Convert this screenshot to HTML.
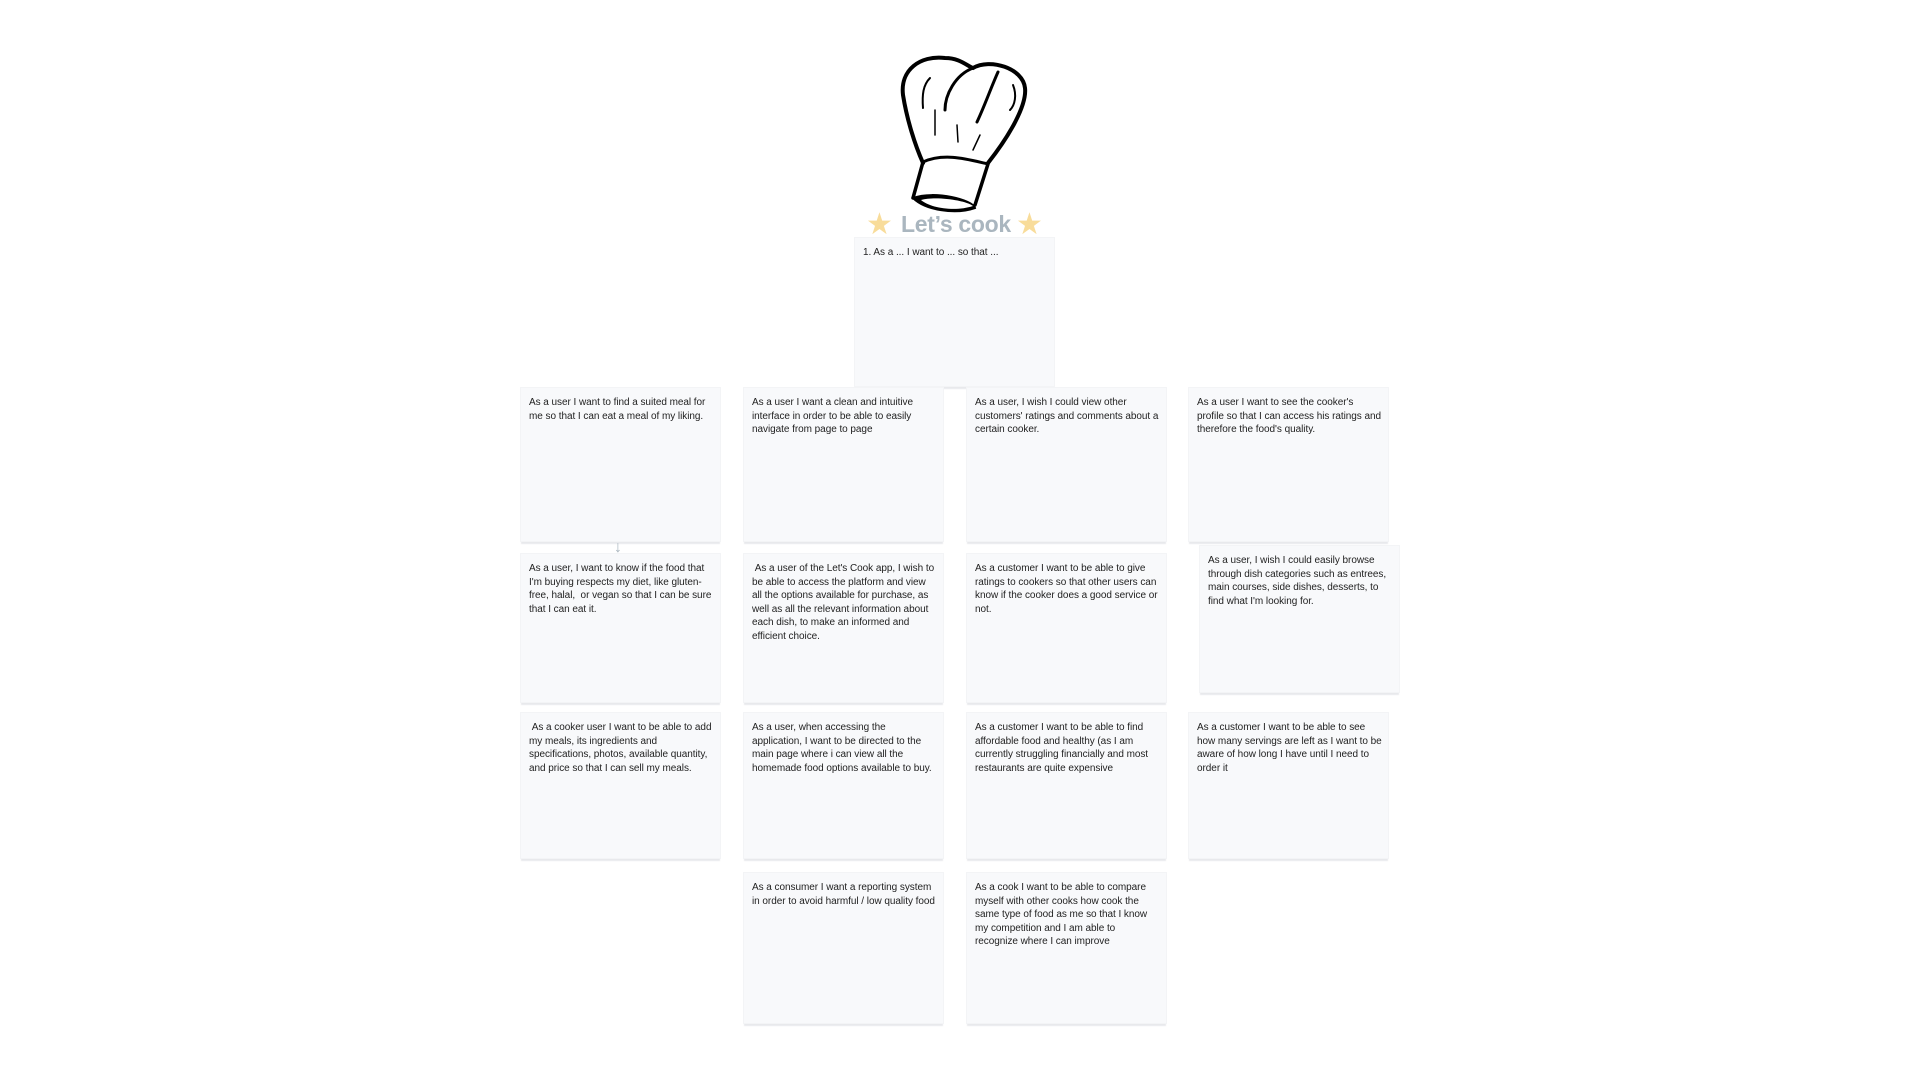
<!DOCTYPE html>
<html><head><meta charset="utf-8"><style>
body{margin:0;width:1920px;height:1080px;background:#fff;position:relative;overflow:hidden;font-family:"Liberation Sans",Arial,sans-serif}
.c{position:absolute;width:199px;background:#f8f9fb;box-shadow:0 0 0 1px #f3f4f6,0 3px 1px 0 #e8e9ec;font-size:10px;line-height:13.5px;color:#222;padding:8px 6px 8px 8px;box-sizing:border-box;letter-spacing:-0.05px}
.t{position:absolute;left:901px;top:211px;font-size:23px;font-weight:bold;color:#aab6bf;letter-spacing:-0.3px}
.s{position:absolute;top:210px;font-size:30px;color:#f8dc9a;line-height:30px}
</style></head><body>
<svg style="position:absolute;left:895px;top:50px" width="150" height="165" viewBox="0 0 150 165">
<g fill="none" stroke="#000" stroke-linecap="round">
<path d="M28 113 C20 95 12 70 8 45 C5 20 25 5 50 8 C65 8 72 16 78 18 C95 8 128 18 130 38 C132 55 115 85 93 113" stroke-width="4"/>
<path d="M28 112 C50 102 75 110 93 114" stroke-width="3"/>
<path d="M28 112 L18 148 M93 114 L80 155" stroke-width="3.5"/>
<path d="M18 148 C30 160 60 165 80 158 C78 150 40 140 18 148 Z" fill="#000" stroke-width="2"/>
<path d="M26 150 C40 146 70 150 78 156 C60 162 35 158 26 150 Z" fill="#fff" stroke="none"/>
<path d="M78 18 C60 25 50 45 50 60" stroke-width="3"/>
<path d="M103 22 C95 40 90 55 82 72" stroke-width="3"/>
<path d="M35 28 C28 35 27 45 28 58" stroke-width="2"/>
<path d="M118 35 C122 45 120 55 115 60" stroke-width="2"/>
<path d="M40 60 L40 85 M62 75 L63 92 M85 85 L78 100" stroke-width="1.5"/>
</g></svg>
<div class="s" style="left:866px">★</div>
<div class="t">Let’s cook</div>
<div class="s" style="left:1016px">★</div>

<div class="c" style="left:855px;top:238px;height:148px">1. As a ... I want to ... so that ...</div>

<div class="c" style="left:521px;top:388px;height:153px">As a user I want to find a suited meal for me so that I can eat a meal of my liking.</div>
<div class="c" style="left:744px;top:388px;height:153px">As a user I want a clean and intuitive interface in order to be able to easily navigate from page to page</div>
<div class="c" style="left:967px;top:388px;height:153px">As a user, I wish I could view other customers' ratings and comments about a certain cooker.</div>
<div class="c" style="left:1189px;top:388px;height:153px">As a user I want to see the cooker's profile so that I can access his ratings and therefore the food's quality.</div>

<div style="position:absolute;left:614px;top:539px;color:#aab6bf;font-size:16px;font-weight:bold">↓</div>

<div class="c" style="left:521px;top:554px;height:148px">As a user, I want to know if the food that I'm buying respects my diet, like gluten-free, halal,&nbsp; or vegan so that I can be sure that I can eat it.</div>
<div class="c" style="left:744px;top:554px;height:148px">&nbsp;As a user of the Let's Cook app, I wish to be able to access the platform and view all the options available for purchase, as well as all the relevant information about each dish, to make an informed and efficient choice.</div>
<div class="c" style="left:967px;top:554px;height:148px">As a customer I want to be able to give ratings to cookers so that other users can know if the cooker does a good service or not.</div>
<div class="c" style="left:1200px;top:546px;height:146px">As a user, I wish I could easily browse through dish categories such as entrees, main courses, side dishes, desserts, to find what I'm looking for.</div>

<div class="c" style="left:521px;top:713px;height:145px">&nbsp;As a cooker user I want to be able to add my meals, its ingredients and specifications, photos, available quantity, and price so that I can sell my meals.</div>
<div class="c" style="left:744px;top:713px;height:145px">As a user, when accessing the application, I want to be directed to the main page where i can view all the homemade food options available to buy.</div>
<div class="c" style="left:967px;top:713px;height:145px">As a customer I want to be able to find affordable food and healthy (as I am currently struggling financially and most restaurants are quite expensive</div>
<div class="c" style="left:1189px;top:713px;height:145px">As a customer I want to be able to see how many servings are left as I want to be aware of how long I have until I need to order it</div>

<div class="c" style="left:744px;top:873px;height:150px">As a consumer I want a reporting system in order to avoid harmful / low quality food</div>
<div class="c" style="left:967px;top:873px;height:150px">As a cook I want to be able to compare myself with other cooks how cook the same type of food as me so that I know my competition and I am able to recognize where I can improve</div>
</body></html>
